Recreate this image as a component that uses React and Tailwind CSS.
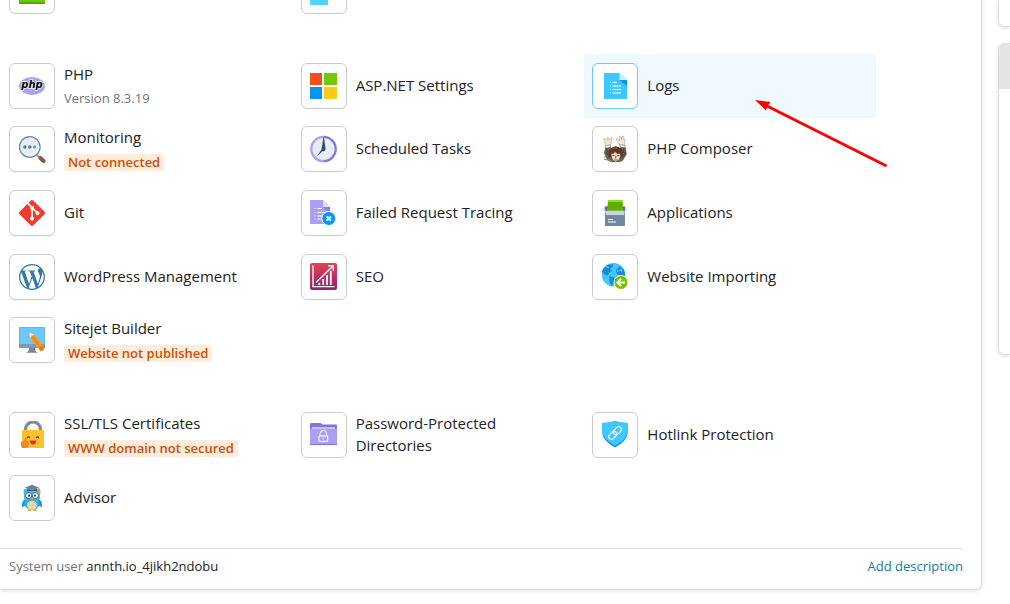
import React from "react";
import { SiGit, SiWordpress } from "react-icons/si";

function Svg({ children }) {
  return (
    <svg viewBox="0 0 28 28" width="28" height="28" aria-hidden="true">
      {children}
    </svg>
  );
}

const PartialGreen = () => (
  <Svg>
    <path d="M1 3H27V26H1Z" fill="#6cc800" />
    <path d="M1 25H27V27H1Z" fill="#58a800" />
  </Svg>
);

const PartialBlue = () => (
  <Svg>
    <path d="M0 3H18V28H0Z" fill="#50d4ff" />
    <path d="M18 3H27V22H18Z" fill="#fff" />
  </Svg>
);

const PhpIcon = () => (
  <Svg>
    <ellipse cx="14" cy="14" rx="13" ry="9" fill="#a4a6ef" />
    <text
      x="14"
      y="16"
      textAnchor="middle"
      className="font-['DejaVu_Sans'] text-[10px] font-bold italic"
      fill="#000"
      stroke="#fff"
      strokeWidth="1.4"
      paintOrder="stroke"
    >
      php
    </text>
  </Svg>
);

const MonitoringIcon = () => (
  <Svg>
    <path d="M19 20L22 23" stroke="#c89878" strokeWidth="2.4" />
    <path d="M22.5 23L25.5 26" stroke="#8a5a3c" strokeWidth="4" strokeLinecap="round" />
    <circle cx="11.8" cy="12" r="10.3" fill="#e9eff5" stroke="#71879f" strokeWidth="1.2" />
    <circle cx="6.8" cy="12" r="1.7" fill="#567592" />
    <circle cx="11.8" cy="12" r="1.7" fill="#567592" />
    <circle cx="16.6" cy="12" r="1.7" fill="#7a9db5" />
  </Svg>
);

const GitIcon = () => <SiGit size={26} color="#f03c2e" aria-hidden="true" />;
const WordPressIcon = () => <SiWordpress size={26} color="#3379a2" aria-hidden="true" />;

const SitejetIcon = () => (
  <Svg>
    <path d="M11 21H17L17.5 25L20 26.7H8L10.5 25Z" fill="#7286a0" />
    <rect x="1" y="1" width="26" height="21" rx="1" fill="#8297b0" />
    <path d="M1.5 1.5H26.5V18H1.5Z" fill="#69c8fc" />
    <path d="M11.2 6.5L16 8.6L26 21.6Q26.4 24.6 22.5 24.9L12 12Z" fill="#ff9b0d" />
    <path d="M11.2 6.5L16 8.6L12 12Z" fill="#ffe9d0" />
    <path d="M14 10.3L24.2 23.3" stroke="#f77e05" strokeWidth="1.3" />
    <path d="M22.5 24.9Q26.4 24.6 26 21.6L24.5 19.8L20.8 22.8Z" fill="#fb7208" />
  </Svg>
);

const LockIcon = () => (
  <Svg>
    <path d="M7.5 11V8.5A7.4 7.4 0 0 1 22.5 8.5V11" fill="none" stroke="#7d8c95" strokeWidth="3.2" />
    <rect x="4" y="9" width="22" height="18" rx="1" fill="#ffc02c" />
    <path d="M9 16.8Q10.5 14.8 12 16.8M18 16.8Q19.5 14.8 21 16.8" fill="none" stroke="#5f4327" strokeWidth="1.2" />
    <path d="M12 19.5H18.2Q18.2 23.6 15 23.6T12 19.5Z" fill="#dc3328" />
    <path d="M7.5 16.2Q9.5 16.4 8.5 20Q11.5 20 11 22Q11 26.5 8 27H4.5Q3 26.8 3 24.5V21Q6.8 20 7.5 16.2Z" fill="#ec8d1b" />
  </Svg>
);

const OwlIcon = () => (
  <Svg>
    <path d="M6.5 5L5.5 7L6.2 15L9 19H19L21.8 15L22.5 7L21.5 5Z" fill="#40b8ef" />
    <path d="M6.8 15.5Q3.6 17 4 23.3L8.5 21ZM21.2 15.5Q24.4 17 24 23.3L19.5 21Z" fill="#0798df" />
    <ellipse cx="14" cy="19.5" rx="7.5" ry="6.3" fill="#35a9e0" />
    <ellipse cx="14" cy="21.3" rx="5" ry="4.5" fill="#ead2ae" />
    <path d="M9 4.5H19V7.5Q14 6 9 7.5Z" fill="#52647d" />
    <path d="M6.5 3.8L14 .8L21.5 3.8L14 6.2Z" fill="#6d7f99" />
    <path d="M21 4V10.5" stroke="#f5a21a" strokeWidth="1.3" />
    <circle cx="10.6" cy="11.6" r="3" fill="#fff" stroke="#2b6387" strokeWidth=".9" />
    <circle cx="17.4" cy="11.6" r="3" fill="#fff" stroke="#2b6387" strokeWidth=".9" />
    <circle cx="11" cy="11.6" r="1.1" fill="#28465c" />
    <circle cx="17" cy="11.6" r="1.1" fill="#28465c" />
    <path d="M12.5 14H15.5L14 16.6Z" fill="#f6a40e" />
    <path d="M9.8 26.2H12.8M15.2 26.2H18.2" stroke="#f3a71e" strokeWidth="1.8" />
  </Svg>
);

const WindowsIcon = () => (
  <Svg>
    <path d="M0 1H12V13H0Z" fill="#f25022" />
    <path d="M14 1H27V13H14Z" fill="#75c800" />
    <path d="M0 15H12V27H0Z" fill="#0098ed" />
    <path d="M14 15H27V27H14Z" fill="#ffca1c" />
  </Svg>
);

const ClockIcon = () => (
  <Svg>
    <circle cx="13.5" cy="14" r="12" fill="#e7edf2" />
    <path d="M13.5 1.8A12.2 12.2 0 0 0 13.5 26.2" fill="none" stroke="#ad9ff1" strokeWidth="2.3" />
    <path d="M13.5 1.8A12.2 12.2 0 0 1 13.5 26.2" fill="none" stroke="#8775df" strokeWidth="2.3" />
    <path d="M13.3 2.5H14L15.5 13.5Q15.5 16.5 12.5 16.3L7 21.2L11.6 14.3Z" fill="#334d69" />
  </Svg>
);

const TracingIcon = () => (
  <Svg>
    <path d="M0 1H13L20 8V25H0Z" fill="#ac9ff3" />
    <path d="M13 1L20 8H13Z" fill="#e5d8fb" />
    <path d="M13 8H20V14Z" fill="#8d7be5" />
    <path d="M7.5 9.5H12M7.5 13.5H16M7.5 17H12M7.5 20H11" stroke="#fff" strokeWidth="1.1" />
    <path d="M4 9.5H6M4 13.5H6M4 17H6M4 20H6" stroke="#d4ccfa" strokeWidth="1.1" />
    <circle cx="18.8" cy="19.5" r="7" fill="#0699ec" stroke="#fff" />
    <path d="M16.7 17.4L20.9 21.6M20.9 17.4L16.7 21.6" stroke="#fff" strokeWidth="2" />
  </Svg>
);

const SeoIcon = () => (
  <Svg>
    <defs>
      <linearGradient id="seoFill" x1="0" y1="0" x2="0" y2="1">
        <stop stopColor="#e04355" />
        <stop offset="1" stopColor="#90236d" />
      </linearGradient>
    </defs>
    <rect width="27" height="27" rx="2" fill="url(#seoFill)" />
    <path d="M3 2.5V23.7H24.5M6 19.5L23 3M18 2.8H23.2V8" fill="none" stroke="#fff" strokeWidth="1.3" />
    <path d="M9.3 22V20M13.2 22V16M17 22V12M20.8 22V8" stroke="#fff" strokeWidth="1.8" />
  </Svg>
);

const LogsIcon = () => (
  <Svg>
    <path d="M3 1H18.5L26 8V27H3Z" fill="#3ec7ff" />
    <path d="M18.5 1L26 8H18.5Z" fill="#c9ecff" />
    <path d="M18.5 8H26V14.5Z" fill="#0797e9" />
    <path d="M11.5 10.3H16M11.5 14H20M11.5 17.5H20M11.5 21H20" stroke="#fff" strokeWidth="1.1" />
    <path d="M8.8 10.3H10M8.8 14H10M8.8 17.5H10M8.8 21H10" stroke="#c9f0ff" strokeWidth="1.1" />
  </Svg>
);

const ComposerIcon = () => (
  <Svg>
    <path d="M4.5 12L9 11L11 14H18L20 11L24.5 12L25.8 19L22 25.5L19 27H10L6 25L3 18Z" fill="#6d6251" />
    <path d="M5 10.5L3 5.5L2.8 3.5L4.2 3.4L5.8 5.5L6 2.8L7.2 2.6L8.2 5L10.5 2.3L11.2 3L10.2 6.5L9.5 10Z" fill="#f7e6d2" stroke="#8d8477" strokeWidth=".4" />
    <path d="M18.8 10L16 6L15.4 3.6L16.8 3.8L18.6 5.6L18.2 1.4L19.6 1.2L20.6 4.6L21.6 1L22.8 1.2L22.7 5L24 4L23.8 10Z" fill="#f7e6d2" stroke="#8d8477" strokeWidth=".4" />
    <path d="M4 10.8L9.3 10L9.8 12L5 13.2ZM18.8 9.8L24.2 10.6L24 12.8L19.2 12Z" fill="#fff" stroke="#666" strokeWidth=".5" />
    <path d="M7.5 22Q6 13 14.5 11.3Q23 12.5 22 21L19 23H10Z" fill="#5e3826" />
    <path d="M11 14Q14 12 17 13.5" fill="none" stroke="#875a40" strokeWidth="1" />
    <path d="M10 18.5L12.6 18.5L14 16.5L16 18.5L19.5 18.5Q20 25 14.8 27Q10 25 10 18.5Z" fill="#f7dec5" stroke="#564337" strokeWidth=".6" />
    <path d="M11.2 20.6H13.5M16 20.6H18.5M14.8 20.5V23L14 23.2M13.2 25H16.5" fill="none" stroke="#433027" strokeWidth=".7" />
    <path d="M3 22L6 22M3 24.5L9 25L12 27.5M18 27L22 25" fill="none" stroke="#7f858b" strokeWidth="1" />
    <path d="M5 13L7 17M5 17L7.5 21M23 13L22.5 18M24.5 17L22 22" stroke="#302e29" strokeWidth=".7" />
  </Svg>
);

const ApplicationsIcon = () => (
  <Svg>
    <path d="M4 7L1 10L4 12.5H24L27 10L24 7Z" fill="#d6dfed" />
    <path d="M4 7.5H24V15H4Z" fill="#5d718b" />
    <path d="M7 2Q7 1 8 1H20.5Q21.5 1 21.5 2L22.5 12.5H6Z" fill="#5eae00" />
    <path d="M7 3V2Q7 1 8 1H20.5Q21.5 1 21.5 2V3Z" fill="#87e512" />
    <path d="M4 15H24V27H4Z" fill="#7188a4" />
    <path d="M4 11.7H24L23 16H5Z" fill="#c9d3e5" />
    <path d="M7 20.5H12M7 23H15" stroke="#fff" strokeWidth="1.1" />
  </Svg>
);

const ImportIcon = () => (
  <Svg>
    <circle cx="12.5" cy="11.7" r="11.7" fill="#42c7ff" />
    <path d="M2 6L6 2L12 1.2L12 3.5L9 5.5L11 7.5L8 10L6.5 13L3 11L1 9ZM8.5 13L13 14.5L14 18L10.5 23L8.3 18ZM15 7L19 3L23 7L24.2 12L21 14L17 12L15.5 9.5Z" fill="#168bd9" />
    <path d="M16 8.5L20 6.5L21 9M5 3.5L8 5" fill="none" stroke="#61d1ff" strokeWidth="1.2" />
    <circle cx="20" cy="19.5" r="7" fill="#75c800" stroke="#fff" />
    <path d="M24 19.5H16.8M20 16L16.5 19.5L20 23" fill="none" stroke="#fff" strokeWidth="1.8" />
  </Svg>
);

const FolderIcon = () => (
  <Svg>
    <path d="M0 3Q0 2 1 2H10.5L12.5 3.5H26Q27 3.5 27 4.5V24H0Z" fill="#8673df" />
    <path d="M2 6.3H25V9H2Z" fill="#e6e0ff" />
    <path d="M0 7.5H27V23H0Z" fill="#ac9ff1" />
    <path d="M10 15V12.7A3.3 3.3 0 0 1 16.6 12.7V15M9 15H17.6V20.3H9Z" fill="none" stroke="#fff" strokeWidth="1" />
    <path d="M13.3 16.5V18.5" stroke="#fff" strokeWidth="1" />
  </Svg>
);

const ShieldIcon = () => (
  <Svg>
    <path d="M1 2Q8 2 14 0Q20 2 27 2V10Q27 20 14 26.4Q1 20 1 10Z" fill="#1598e8" />
    <path d="M1 2Q8 2 14 0Q20 2 27 2V9Q26 19 14 24.5Q2 19 1 9Z" fill="#42c8ff" />
    <g transform="rotate(-45 14 12)" fill="none" stroke="#fff" strokeWidth="1.1">
      <rect x="6.2" y="9.3" width="9" height="5.4" rx="2.7" />
      <rect x="12.8" y="9.3" width="9" height="5.4" rx="2.7" />
    </g>
  </Svg>
);

function Tool({ icon: Icon, title, note, badge, active }) {
  return (
    <a
      href="#"
      className={
        active
          ? "flex items-start gap-[9px] self-start rounded-xs bg-[#f0f9ff] px-2 py-[9px]"
          : "flex items-start gap-[9px] self-start px-2 py-[9px]"
      }
    >
      <span
        className={
          active
            ? "flex size-[46px] shrink-0 items-center justify-center rounded-md border border-[#69ccfd] bg-white"
            : "flex size-[46px] shrink-0 items-center justify-center rounded-md border border-[#cacaca] bg-white"
        }
      >
        <Icon />
      </span>
      <span className="flex min-h-11 max-w-[180px] flex-col items-start justify-center">
        <span className="text-[15px] leading-[22px]">{title}</span>
        {note && <span className="mt-[3px] text-[13px] leading-5 text-[#737373]">{note}</span>}
        {badge && (
          <span className="mt-1 flex h-5 items-center">
            <span className="rounded-xs bg-[#feedd8] px-1 text-[13px] leading-[17px] font-semibold whitespace-nowrap text-[#c8500f]">
              {badge}
            </span>
          </span>
        )}
      </span>
    </a>
  );
}

const devTools = [
  { icon: PhpIcon, title: "PHP", note: "Version 8.3.19" },
  { icon: WindowsIcon, title: "ASP.NET Settings" },
  { icon: LogsIcon, title: "Logs", active: true },
  { icon: MonitoringIcon, title: "Monitoring", badge: "Not connected" },
  { icon: ClockIcon, title: "Scheduled Tasks" },
  { icon: ComposerIcon, title: "PHP Composer" },
  { icon: GitIcon, title: "Git" },
  { icon: TracingIcon, title: "Failed Request Tracing" },
  { icon: ApplicationsIcon, title: "Applications" },
  { icon: WordPressIcon, title: "WordPress Management" },
  { icon: SeoIcon, title: "SEO" },
  { icon: ImportIcon, title: "Website Importing" },
  { icon: SitejetIcon, title: "Sitejet Builder", badge: "Website not published" },
];

const securityTools = [
  { icon: LockIcon, title: "SSL/TLS Certificates", badge: "WWW domain not secured" },
  { icon: FolderIcon, title: "Password-Protected Directories" },
  { icon: ShieldIcon, title: "Hotlink Protection" },
  { icon: OwlIcon, title: "Advisor" },
];

export default function App() {
  return (
    <div className="relative flex items-start gap-4 overflow-hidden bg-white pb-4 font-['Open_Sans',sans-serif] text-[#222]">
      <main className="-mt-[41px] min-w-0 flex-1 rounded-br-md border-r border-b border-[#dedede] shadow-[0_1px_4px_rgba(0,0,0,0.12)]">
        <div className="flex flex-col gap-8 pr-[105px] pl-px">
          <section className="grid grid-cols-3 grid-rows-[63px]">
            <Tool icon={PartialGreen} />
            <Tool icon={PartialBlue} />
          </section>
          <section className="grid grid-cols-3 grid-rows-[63px_64px_64px_63px_63px]">
            {devTools.map((tool) => (
              <Tool key={tool.title} {...tool} />
            ))}
          </section>
          <section className="grid grid-cols-3 grid-rows-[63px_64px]">
            {securityTools.map((tool) => (
              <Tool key={tool.title} {...tool} />
            ))}
          </section>
        </div>
        <footer className="mt-[18px] mr-[18px] flex items-center justify-between border-t border-[#dcdcdc] pt-[7px] pb-[13px] pl-[9px] text-[13px] leading-5">
          <p>
            <span className="text-[#737373]">System user</span> annth.io_4jikh2ndobu
          </p>
          <a href="#" className="text-[#1d7a9c]">
            Add description
          </a>
        </footer>
      </main>

      <aside className="flex w-3 shrink-0 flex-col gap-4">
        <div className="h-[27px] rounded-bl-md border-b border-l border-[#dedede] shadow-[0_1px_4px_rgba(0,0,0,0.12)]" />
        <div className="h-[312px] overflow-hidden rounded-l-md border-b border-l border-[#dedede] shadow-[0_1px_4px_rgba(0,0,0,0.12)]">
          <div className="h-[46px] bg-[#e4e4e4]" />
        </div>
      </aside>

      <svg
        className="pointer-events-none absolute top-[98px] left-[753px]"
        width="136"
        height="70"
        viewBox="0 0 136 70"
        aria-hidden="true"
      >
        <path d="M13 7.5L133.5 68" stroke="#f00" strokeWidth="2.8" />
        <path d="M2 2L17.5 4L14.5 8L13 12.5Z" fill="#f00" />
      </svg>
    </div>
  );
}
